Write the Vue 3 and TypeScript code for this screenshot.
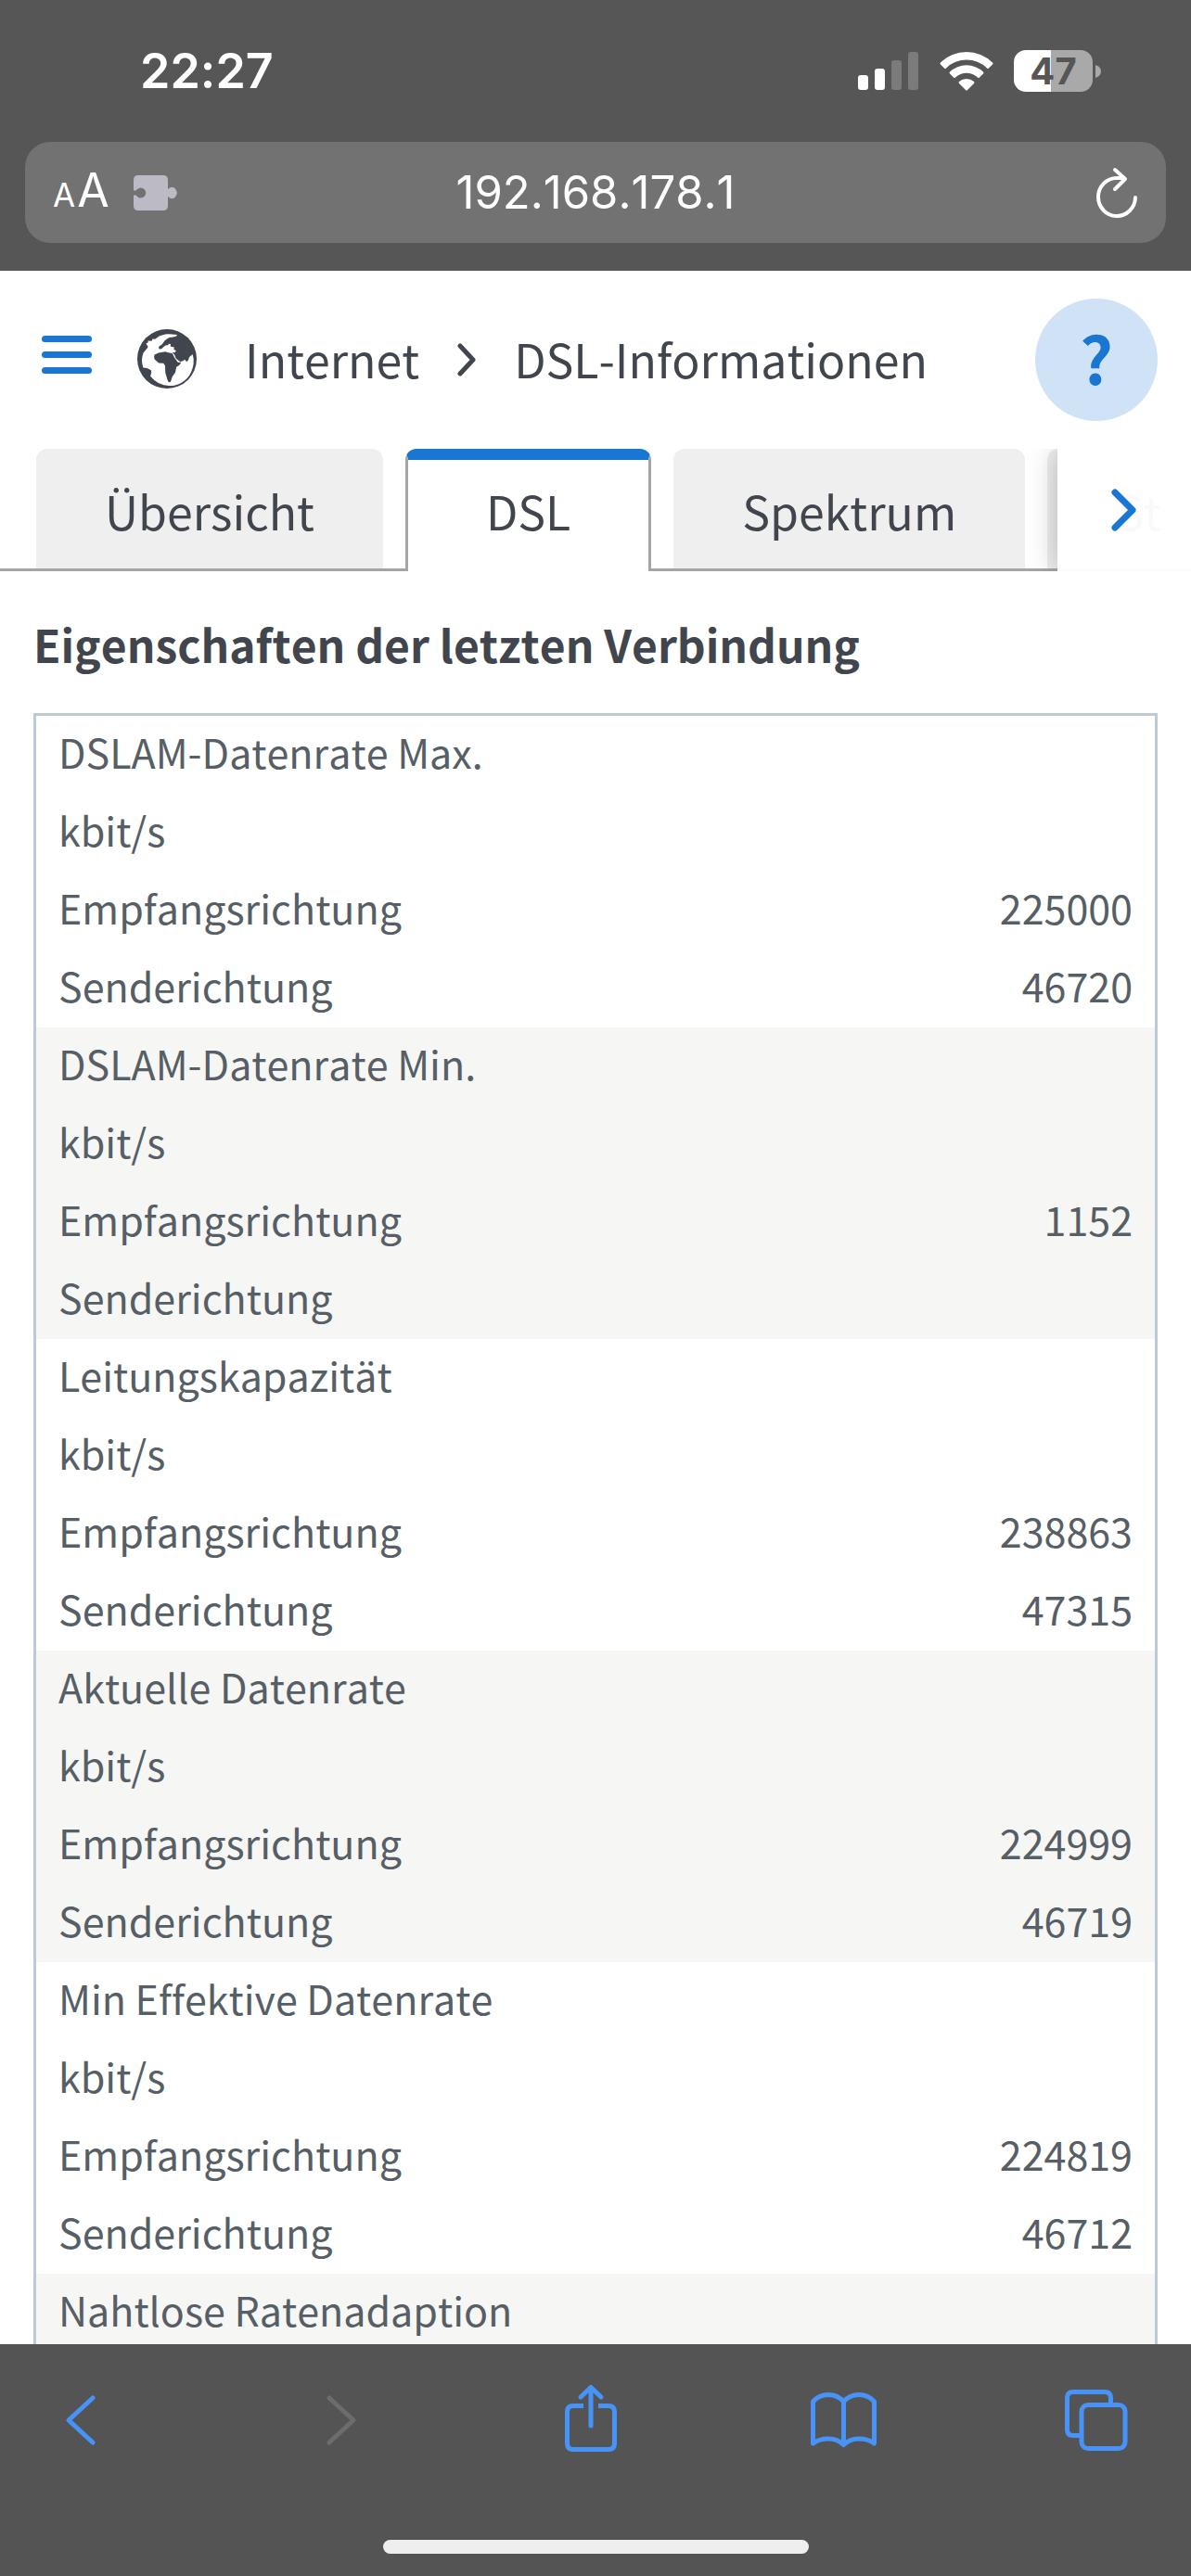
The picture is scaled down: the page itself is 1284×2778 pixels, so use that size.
<script setup lang="ts">
interface RateGroup {
  title: string
  unit?: string
  down?: string
  up?: string
}

const groups: RateGroup[] = [
  { title: 'DSLAM-Datenrate Max.', unit: 'kbit/s', down: '225000', up: '46720' },
  { title: 'DSLAM-Datenrate Min.', unit: 'kbit/s', down: '1152', up: '' },
  { title: 'Leitungskapazität', unit: 'kbit/s', down: '238863', up: '47315' },
  { title: 'Aktuelle Datenrate', unit: 'kbit/s', down: '224999', up: '46719' },
  { title: 'Min Effektive Datenrate', unit: 'kbit/s', down: '224819', up: '46712' },
  { title: 'Nahtlose Ratenadaption' },
]

const tabs = ['Übersicht', 'DSL', 'Spektrum', 'St']
const activeTab = 'DSL'
</script>

<template>
  <div class="screen">
    <header class="chrome">
      <div class="status">
        <time class="clock">22:27</time>
        <div class="indicators">
          <svg class="signal" viewBox="0 0 65 41" aria-hidden="true">
            <rect x="0" y="25" width="11" height="16" rx="3" fill="#fff" />
            <rect x="18" y="18" width="11" height="23" rx="3" fill="#fff" />
            <rect x="36" y="9" width="11" height="32" rx="3" fill="#7b7b7b" />
            <rect x="54" y="0" width="11" height="41" rx="3" fill="#7b7b7b" />
          </svg>
          <svg class="wifi" viewBox="0 0 58 42" aria-hidden="true">
            <path fill="#fff" d="M1 11.500a40 40 0 0 1 56 0q1 1 0 2l-4 4q-1 1-2 0a31.500 31.500 0 0 0-44 0q-1 1-2 0l-4-4q-1-1 0-2z" />
            <path fill="#fff" d="M11 21.500a26 26 0 0 1 36 0q1 1 0 2l-4 4q-1 1-2 0a17.500 17.500 0 0 0-24 0q-1 1-2 0l-4-4q-1-1 0-2z" />
            <path fill="#fff" d="M21 32a12 12 0 0 1 16 0q1 1 0 2l-7 7q-1 1-2 0l-7-7q-1-1 0-2z" />
          </svg>
          <div class="battery"><span>47</span></div>
          <svg class="nub" viewBox="0 0 6 14" aria-hidden="true"><path fill="#a9a9a9" d="M0 0q6 2 6 7t-6 7z" /></svg>
        </div>
      </div>
      <div class="address">
        <div class="side">
          <button class="text-size" aria-label="Textgröße"><small>A</small>A</button>
          <svg class="puzzle" viewBox="0 0 47 38" aria-hidden="true">
            <path fill="#bcbac5" d="M5 0h27q5 0 5 5v10q7-6 10 4-3 10-10 4v10q0 5-5 5H5q-5 0-5-5V22q2-2 4 1a5.500 5.500 0 1 0 0-8q-2 3-4 1V5q0-5 5-5z" />
          </svg>
        </div>
        <span class="host">192.168.178.1</span>
        <button class="reload" aria-label="Neu laden">
          <svg viewBox="0 0 46 56" fill="none" stroke="#fff" stroke-width="4" stroke-linecap="round" stroke-linejoin="round">
            <path d="M43 33A20 20.500 0 1 1 23 12h8M21 3l11 10-11 11" />
          </svg>
        </button>
      </div>
    </header>

    <main class="page">
      <nav class="topbar" aria-label="Pfad">
        <button class="menu" aria-label="Menü"><i></i><i></i><i></i></button>
        <svg class="globe" viewBox="55 45 190 190" aria-hidden="true">
          <circle cx="150" cy="140" r="95" fill="#41464e" />
          <path fill="#fff" d="M83 91l7-4-1-5 12 1 3-7 8 1q13-12 27-14 8-5 43 0 2 5-12 7-15 0-18 5l-9 6-9 13-10 7q-1 7 2 8 8 1 11-5l8-7 8-1 3-4 6 1-1 7 12 3-1 7 7 3-3 6h-9l7 8 5 12 13 10q11-1 15-7l6 8q8-7 8-15l11-10q5 15 3 31-9 56-62 69-46 8-76-29l3-12q1-9-8-11l-6-3-12-2q-9-25 1-48l12-14q5-5 0-9z" />
          <path fill="#41464e" d="M110 127l13-6 22-4 9 3 13 2 8 16 10 13h10q-3 10-15 15l-3 17-10 14-5 16q-5 5-9-2l-8-26-1-23-5-8-15-1-13-11q-4-10-1-15z" />
        </svg>
        <a href="#internet" class="crumb">Internet</a>
        <svg class="sep" viewBox="0 0 20 36" aria-hidden="true"><path d="M3 3l14 15L3 33" fill="none" stroke="#41464e" stroke-width="5" stroke-linecap="round" stroke-linejoin="round" /></svg>
        <a href="#dsl" class="crumb">DSL-Informationen</a>
        <button class="help">?</button>
      </nav>

      <div class="tabs">
        <button v-for="tab in tabs" :key="tab" class="tab" :class="{ active: tab === activeTab }">{{ tab }}</button>
        <button class="scroll" aria-label="Weitere Reiter">
          <svg viewBox="0 0 28 46" fill="none" stroke="#1976d2" stroke-width="7" stroke-linecap="round" stroke-linejoin="round"><path d="M4 4l19 19L4 42" /></svg>
        </button>
      </div>

      <section class="content">
        <h1>Eigenschaften der letzten Verbindung</h1>
        <table>
          <tbody v-for="g in groups" :key="g.title">
            <tr><th colspan="2" scope="rowgroup">{{ g.title }}</th></tr>
            <template v-if="g.unit">
              <tr><td colspan="2">{{ g.unit }}</td></tr>
              <tr><th scope="row">Empfangsrichtung</th><td class="num">{{ g.down }}</td></tr>
              <tr><th scope="row">Senderichtung</th><td class="num">{{ g.up }}</td></tr>
            </template>
          </tbody>
        </table>
      </section>
    </main>

    <footer class="toolbar">
      <div class="actions">
        <button aria-label="Zurück">
          <svg viewBox="0 0 76 80"><path d="M51 18L25 42l26 24" /></svg>
        </button>
        <button aria-label="Vorwärts" disabled>
          <svg viewBox="0 0 76 80"><path d="M32 18l26 24-26 24" /></svg>
        </button>
        <button aria-label="Teilen">
          <svg viewBox="0 0 76 80">
            <path stroke-linecap="butt" d="M32 26.500H21q-6.500 0-6.500 6.500v34q0 6.500 6.500 6.500h38q6.500 0 6.500-6.500V33q0-6.500-6.500-6.500H48" />
            <path d="M40 48V7M29 17L40 6.500 51 17" />
          </svg>
        </button>
        <button aria-label="Lesezeichen">
          <svg viewBox="0 0 76 80"><path d="M39.500 22Q33 14.500 23 14.500T6.500 22V67Q13 62 23 62T39.500 68.500Q46 62 56 62T72.500 67V22Q66 14.500 56 14.500T39.500 22V68" /></svg>
        </button>
        <button aria-label="Tabs">
          <svg viewBox="0 0 76 80"><path d="M21 58.500h-8q-6.500 0-6.500-6.500V18q0-6.500 6.500-6.500h34q6.500 0 6.500 6.500v7" /><rect x="22" y="25.500" width="47" height="47" rx="7" /></svg>
        </button>
      </div>
      <div class="home"></div>
    </footer>
  </div>
</template>

<style>
body {
  margin: 0;
}
</style>

<style scoped>
.screen {
  display: flex;
  flex-direction: column;
  height: 100vh;
  overflow: hidden;
  background: #fff;
  color: #41464e;
  font-family: "Noto Sans CJK SC", "Noto Sans", sans-serif;
  font-kerning: none;
  font-variant-ligatures: none;
}
button {
  padding: 0;
  border: 0;
  background: none;
  color: inherit;
  font: inherit;
  font-kerning: none;
}
svg {
  display: block;
  flex: none;
}
a {
  color: inherit;
  text-decoration: none;
}
.chrome {
  flex: none;
  padding: 0 27px 30px;
  background: #565656;
  color: #fff;
  font-family: Inter, sans-serif;
}
.status {
  display: flex;
  justify-content: space-between;
  align-items: center;
  height: 153px;
  padding: 0 70px 0 124px;
}
.clock {
  font-size: 52px;
  font-weight: 600;
}
.indicators {
  display: flex;
  align-items: center;
}
.signal {
  width: 65px;
  height: 41px;
  margin-right: 23px;
}
.wifi {
  width: 58px;
  height: 42px;
  margin-right: 22px;
}
.battery {
  width: 85px;
  height: 45px;
  border-radius: 13px;
  background: linear-gradient(90deg, #fff 47%, #a9a9a9 47%);
  color: #565656;
  font-size: 40px;
  font-weight: 700;
  line-height: 45px;
  text-align: center;
}
.nub {
  width: 6px;
  height: 14px;
  margin-left: 3px;
}
.address {
  display: grid;
  grid-template-columns: 1fr auto 1fr;
  align-items: center;
  height: 109px;
  padding: 0 30px;
  border-radius: 27px;
  background: #727272;
}
.side {
  display: flex;
  align-items: center;
  gap: 26px;
}
.text-size {
  font-size: 50px;
  line-height: 60px;
}
.text-size small {
  margin-right: 2px;
  font-size: 35px;
}
.puzzle {
  width: 47px;
  height: 38px;
}
.host {
  font-size: 49px;
}
.reload {
  justify-self: end;
}
.reload svg {
  width: 46px;
  height: 56px;
}
.page {
  flex: 1;
  min-height: 0;
  overflow: hidden;
}
.topbar {
  display: flex;
  align-items: center;
  height: 132px;
  padding: 30px 36px 30px 45px;
}
.menu {
  display: grid;
  gap: 10px;
  width: 54px;
  margin: 0 49px 12px 0;
}
.menu i {
  height: 7px;
  border-radius: 4px;
  background: #1976d2;
}
.globe {
  width: 64px;
  height: 64px;
  margin: 0 52px 2px 0;
}
.crumb {
  margin-bottom: 4px;
  font-size: 50px;
  line-height: 72px;
}
.sep {
  width: 20px;
  height: 36px;
  margin: 0 41px;
}
.help {
  width: 132px;
  height: 132px;
  margin-left: auto;
  padding-bottom: 6px;
  border-radius: 50%;
  background: #d0e3f6;
  color: #1976d2;
  font-size: 70px;
  font-weight: 700;
  line-height: 126px;
}
.tabs {
  position: relative;
  display: flex;
  height: 132px;
  overflow: hidden;
}
.tabs::before {
  content: "";
  flex: none;
  width: 39px;
  box-sizing: border-box;
  border-bottom: 3px solid #a3a5a7;
}
.tab {
  position: relative;
  flex: none;
  box-sizing: border-box;
  padding: 0 74px;
  border-radius: 12px 12px 0 0;
  background: #efefef;
  font-size: 50px;
}
.tab + .tab {
  margin-left: 24px;
}
.tab::after {
  content: "";
  position: absolute;
  left: 0;
  right: -24px;
  bottom: 0;
  height: 3px;
  background: #a3a5a7;
}
.tab.active {
  padding: 0 84px 12px;
  border: 3px solid #a3a5a7;
  border-top: 12px solid #1976d2;
  border-bottom: 0;
  background: #fff;
}
.tab.active::after {
  left: 100%;
  right: -27px;
}
.scroll {
  position: absolute;
  top: 0;
  right: 0;
  bottom: 0;
  display: flex;
  align-items: center;
  width: 144px;
  padding-left: 58px;
  background: rgba(255, 255, 255, 0.97);
  box-shadow: 0 0 30px rgba(0, 0, 0, 0.25);
  box-sizing: border-box;
}
.scroll svg {
  width: 28px;
  height: 46px;
}
.content {
  padding: 0 36px;
}
h1 {
  margin: 0;
  padding: 42px 0 39px;
  font-size: 48px;
  font-weight: 700;
  line-height: 72px;
}
table {
  width: 100%;
  border: 3px solid #bccbd3;
  border-spacing: 0;
  color: #565e66;
  font-size: 43px;
}
tbody:nth-child(even) {
  background: #f6f6f5;
}
th,
td {
  padding: 0 24px 8px;
  font-weight: 400;
  line-height: 76px;
  text-align: left;
}
.num {
  text-align: right;
}
.toolbar {
  flex: none;
  padding: 40px 0 24px;
  background: #545454;
}
.actions {
  display: flex;
  justify-content: space-between;
  margin-bottom: 91px;
  padding: 0 64px 0 49px;
}
.actions svg {
  width: 76px;
  height: 80px;
  fill: none;
  stroke: #4793f8;
  stroke-width: 5;
  stroke-linecap: round;
  stroke-linejoin: round;
}
.actions button:disabled svg {
  stroke: #6c6c6c;
}
.home {
  width: 459px;
  height: 15px;
  margin: 0 auto;
  border-radius: 8px;
  background: #eee;
}
</style>
